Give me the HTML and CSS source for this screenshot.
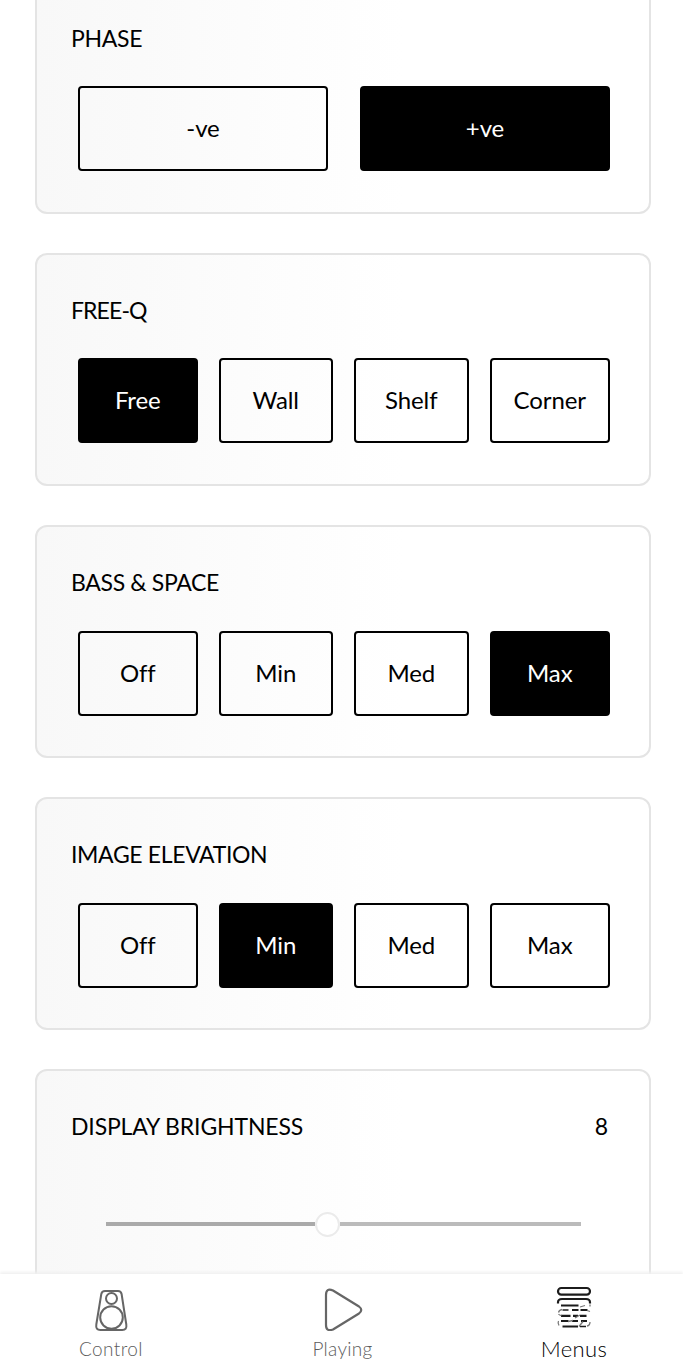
FILE: index.html
```html
<!DOCTYPE html>
<html lang="en">

<head>
    <meta charset="UTF-8">
    <meta name="viewport" content="width=device-width, initial-scale=1.0">
    <title>Menus</title>
    <link rel="stylesheet" href="styles.css">
</head>

<body>
    <main class="settings">
        <section class="card">
            <div class="card-header"><h2 class="phase-title">PHASE</h2></div>
            <div class="options two">
                <button class="option">-ve</button>
                <button class="option selected">+ve</button>
            </div>
        </section>

        <section class="card">
            <div class="card-header"><h2 class="freeq-title">FREE-Q</h2></div>
            <div class="options">
                <button class="option selected">Free</button>
                <button class="option">Wall</button>
                <button class="option">Shelf</button>
                <button class="option">Corner</button>
            </div>
        </section>

        <section class="card">
            <div class="card-header"><h2 class="bass-title">BASS &amp; SPACE</h2></div>
            <div class="options">
                <button class="option">Off</button>
                <button class="option">Min</button>
                <button class="option">Med</button>
                <button class="option selected">Max</button>
            </div>
        </section>

        <section class="card">
            <div class="card-header"><h2 class="image-title">IMAGE ELEVATION</h2></div>
            <div class="options">
                <button class="option">Off</button>
                <button class="option selected">Min</button>
                <button class="option">Med</button>
                <button class="option">Max</button>
            </div>
        </section>

        <section class="card">
            <div class="card-header">
                <h2 class="display-title">DISPLAY BRIGHTNESS</h2>
                <span class="value">8</span>
            </div>
            <div class="slider">
                <div class="track"></div>
                <div class="thumb"></div>
                <div class="track rest"></div>
            </div>
        </section>
    </main>

    <nav class="tabs">
        <a class="tab">
            <svg class="tab-icon" width="60" height="52" viewBox="0 0 60 52" fill="none" stroke="#666" stroke-width="2">
                <path d="M24 12h13q3 0 3.600 3l4.700 30.500q.8 5.500-4 5.500h-22q-4.800 0-4-5.500l5-30.500q.5-3 3.700-3z"/>
                <circle cx="30.500" cy="19.500" r="5.500"/>
                <circle cx="30.500" cy="38.500" r="11.300"/>
            </svg>
            <span class="control-label">Control</span>
        </a>
        <a class="tab">
            <svg class="tab-icon" width="60" height="52" viewBox="0 0 60 52" fill="none" stroke="#666" stroke-width="2.200" stroke-linejoin="round">
                <path d="M13 16q0-7.500 7-4.500l26 16q4.500 3.500 0 7l-26 16q-7 2.500-7-4.500z"/>
            </svg>
            <span class="playing-label">Playing</span>
        </a>
        <a class="tab current">
            <svg class="tab-icon" width="60" height="52" viewBox="0 0 60 52" fill="none" stroke="#1c1c1c" stroke-width="2.200">
                <rect x="14" y="9" width="32" height="6.600" rx="3.300"/>
                <path d="M14 24.500v-1q0-3.500 4-3.500h24q4 0 4 3.500v1"/>
                <path d="M17 26.500h17.500M28 31h6.500M36.500 31h7M17 36.800h9.500M29 36.800h5M36 36.800h6.500M17 42h7.500M28 42h6M37 42h6M18.500 47.500h15.500"/>
                <path d="M18.500 31h6M36 47.500h6" stroke-width="1.600"/>
                <path stroke="#777" stroke-width="1.300" d="M36 28l5-1.500M46 25.500v2M18 30.500q-3 .5-3.500 3M14.500 35q1 1.500 3 1.500M43 31.500l3 1M31 39l5-3M24 42.500l5-1M14.500 42q-1 2 .5 4.500M35 47.500l4-5M43 47q3-.5 3-4"/>
            </svg>
            <span class="menus-label">Menus</span>
        </a>
    </nav>
</body>
</html>
```
FILE: styles.css
```css
* {
    box-sizing: border-box;
}

body {
    margin: 0;
    height: 1368px;
    display: flex;
    flex-direction: column;
    overflow: hidden;
    background-color: white;
    font-family: Lato, sans-serif;
    color: black;
}

/* the list is scrolled, the first card starts above the window */
.settings {
    flex: 1;
    min-height: 0;
    overflow: hidden;
    display: flex;
    flex-direction: column;
    gap: 39px;
    padding: 0 32px 0 35px;
}

.card {
    flex: none;
    height: 233.1px;
    padding: 36px 39px 0 34px;
    border: 2px solid #e4e4e4;
    border-radius: 12px;
    background: linear-gradient(to right, #f8f8f8, #fdfdfd 42%, white 60%);
}

.card:first-child {
    margin-top: -19.300px;
}

.card-header {
    display: flex;
    justify-content: space-between;
    height: 38px;
    line-height: 38px;
    font-size: 23px;
}

h2 {
    margin: 0;
    font-size: 23px;
    font-weight: 400;
    white-space: nowrap;
}

.phase-title {
    letter-spacing: -0.3px;
}

.freeq-title {
    letter-spacing: -0.9px;
}

.bass-title {
    letter-spacing: -0.35px;
}

.image-title {
    letter-spacing: -0.35px;
}

.display-title {
    letter-spacing: -0.15px;
}

.value {
    margin-right: 2px;
}

.options {
    display: grid;
    grid-template-columns: 119.500px 114.500px 114.500px 120.500px;
    gap: 21px;
    margin: 29.700px 0 0 7px;
}

.options.two {
    grid-template-columns: 250px 250px;
    gap: 32px;
}

.option {
    height: 85px;
    padding: 0 0 2px;
    border: 2px solid black;
    border-radius: 4px;
    background-color: transparent;
    color: black;
    font-family: inherit;
    font-size: 24px;
    letter-spacing: -0.1px;
}

.option.selected {
    background-color: black;
    color: white;
}

.slider {
    display: flex;
    align-items: center;
    height: 26px;
    margin: 66px 29px 0 35px;
}

.track {
    width: 209px;
    height: 4px;
    background-color: #aaa;
}

.track.rest {
    flex: 1;
    background-color: #bbb;
}

.thumb {
    width: 25px;
    height: 25px;
    border: 2px solid #ebebeb;
    border-radius: 50%;
    background-color: white;
}

.tabs {
    position: relative;
    z-index: 1;
    flex: none;
    display: flex;
    justify-content: space-between;
    height: 94px;
    padding: 5px 28px 0 30px;
    background-color: white;
    box-shadow: 0 -2px 3px #f0f0f0;
}

.tab {
    display: flex;
    flex-direction: column;
    align-items: center;
    width: 162px;
    color: #5c5c5c;
    font-size: 19px;
    font-weight: 300;
    line-height: 36px;
}

.tab-icon {
    flex: none;
    display: block;
}

.control-label {
    letter-spacing: 0.4px;
}

.playing-label {
    letter-spacing: 0.3px;
}

.tab.current {
    color: black;
    font-size: 22px;
    line-height: 35px;
}

.menus-label {
    letter-spacing: 0.4px;
}
```
